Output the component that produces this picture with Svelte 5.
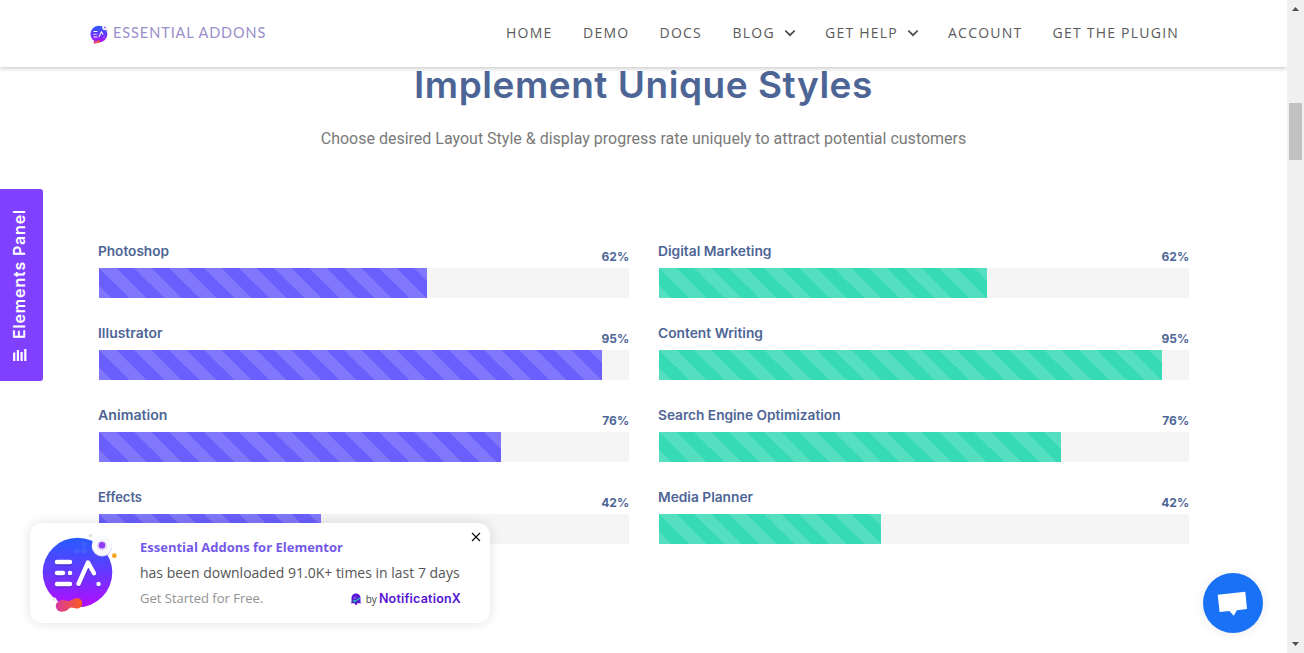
<script>
  const nav = [
    { label: 'HOME' }, { label: 'DEMO' }, { label: 'DOCS' },
    { label: 'BLOG', menu: true }, { label: 'GET HELP', menu: true },
    { label: 'ACCOUNT' }, { label: 'GET THE PLUGIN' }
  ];
  const groups = [
    { tone: 'violet', bars: [['Photoshop', 62, 71], ['Illustrator', 95, 64.5], ['Animation', 76, 69.5], ['Effects', 42, 44]] },
    { tone: 'mint', bars: [['Digital Marketing', 62, 113.5], ['Content Writing', 95, 105], ['Search Engine Optimization', 76, 182.5], ['Media Planner', 42, 95]] }
  ];
</script>

{#snippet logo(id)}
  <svg viewBox="0 0 78 80" class="mark" aria-hidden="true">
    <defs>
      <linearGradient id={id} x1="0" y1="0" x2="0" y2="1">
        <stop offset="0" stop-color="#265cff" />
        <stop offset=".5" stop-color="#6638ff" />
        <stop offset="1" stop-color="#b40cff" />
      </linearGradient>
      <linearGradient id="{id}-b" x1="0" y1="0" x2="1" y2="0">
        <stop offset="0" stop-color="#d63aa0" />
        <stop offset="1" stop-color="#fb5b1b" />
      </linearGradient>
    </defs>
    <circle cx="36.500" cy="40.500" r="34.800" fill="url(#{id})" />
    <g fill="#4260fb" stroke="#4260fb" stroke-width="1.500"><circle cx="36" cy="19" r="1.800" /><circle cx="43" cy="19" r="1.800" /><circle cx="43" cy="12" r="1.500" /><path d="M36 19h7v-7" fill="none" /></g>
    <circle cx="61" cy="14.300" r="10.300" fill="#d4d0ee" />
    <circle cx="61" cy="13.500" r="10" fill="#fafafe" />
    <circle cx="61" cy="13.500" r="5" fill="#e0d4fb" />
    <circle cx="61" cy="13.200" r="3.200" fill="#9239f6" />
    <circle cx="49.500" cy="3.500" r="1.700" fill="#ddd" />
    <circle cx="73.300" cy="23.700" r="2.400" fill="#f8a51b" />
    <path d="M16 31.600h13M16 42.600h6M29 42.600h.1M16 53.600h13M37.500 53.100 47 32.600 53 42.600M57.500 53.600h.1" fill="none" stroke="#3c1ba8" stroke-opacity=".45" stroke-width="4.200" stroke-linecap="round" stroke-linejoin="round" />
    <path d="M16 30h13M16 41h6M29 41h.1M16 52h13M37.500 51.800 47 30.500 53 41.300M57.500 52h.1" fill="none" stroke="#fff" stroke-width="4.400" stroke-linecap="round" stroke-linejoin="round" />
    <circle cx="13.500" cy="67.500" r="2" fill="#eee" />
    <path d="M19 68.500c4-2 6 1 9 .5s5-3 8-3a5 5 0 0 1 0 10.500c-4 0-5-2-8 0-1 1-3 3-6 3a5.600 5.600 0 0 1-3-11Z" fill="url(#{id}-b)" />
  </svg>
{/snippet}

<div class="window">
  <div class="page">
    <header>
      <div class="brand">
        {@render logo('brand')}
        <span>ESSENTIAL ADDONS</span>
      </div>
      <nav>
        {#each nav as item}
          <a href="#top">{item.label}{#if item.menu}<svg width="12" height="8" viewBox="0 0 12 8"><path d="m1.300 1.500 4.700 4.700 4.700-4.700" fill="none" stroke="#454545" stroke-width="1.700" /></svg>{/if}</a>
        {/each}
      </nav>
    </header>

    <main>
      <h1>Implement Unique Styles</h1>
      <p class="lead">Choose desired Layout Style &amp; display progress rate uniquely to attract potential customers</p>
      <div class="groups">
        {#each groups as group}
          <section class={group.tone}>
            {#each group.bars as [name, value, width]}
              <div class="skill">
                <div class="caption">
                  <svg class="name" width={width + 2} height="20"><text x="0" y="14" textLength={width} lengthAdjust="spacingAndGlyphs">{name}</text></svg>
                  <span class="value">{value}%</span>
                </div>
                <div class="track"><div class="fill" style="width: {value}%"></div></div>
              </div>
            {/each}
          </section>
        {/each}
      </div>
    </main>

    <aside class="panel">
      <svg width="14" height="13" viewBox="0 0 14 13"><path d="M1.200 3.500V12M4.900 1V12M8.600 3v9M12.300 0v12" stroke="#fff" stroke-width="2.200" /></svg>
      <span>Elements Panel</span>
    </aside>

    <div class="toast">
      <div class="toast-logo">{@render logo('toast')}</div>
      <div class="toast-body">
        <strong>Essential Addons for Elementor</strong>
        <span class="message">has been downloaded 91.0K+ times in last 7 days</span>
        <div class="foot">
          <span>Get Started for Free.</span>
          <span class="credit">
            <svg width="12" height="12" viewBox="0 0 12 12"><path d="M1.500 9.500V5a4.500 4.500 0 0 1 9 0v4.500l1.300.8H.2Z" fill="#5614d5" /><circle cx="6" cy="10.800" r="1.200" fill="#5614d5" /><circle cx="5" cy="4.800" r="1.500" fill="#7e55e8" /><path d="M3 7.500 5 8.500 10 5" fill="none" stroke="#22c7a5" stroke-width="1.400" /></svg>
            <span class="by">by</span><b>NotificationX</b>
          </span>
        </div>
      </div>
      <svg class="close" width="10" height="10" viewBox="0 0 10 10"><path d="m1 1 8 8M9 1 1 9" stroke="#111" stroke-width="1.200" /></svg>
    </div>

    <div class="chat">
      <svg width="60" height="60" viewBox="0 0 60 60"><path d="m14.700 21.700 27.600-3 1.700 17.300-10 1.200-3.300 5.600-4.300-4.900-9.800 1Z" fill="#fff" /></svg>
    </div>
  </div>

  <div class="scrollbar">
    <svg width="7" height="4" viewBox="0 0 7 4"><path d="M0 4h7L3.500 0Z" fill="#505050" /></svg>
    <div class="thumb"></div>
    <svg class="down" width="7" height="4" viewBox="0 0 7 4"><path d="M0 0h7L3.500 4Z" fill="#505050" /></svg>
  </div>
</div>

<style>
  :global(body) { overflow: hidden; background: #fff; }
  .window { display: flex; width: 1304px; height: 653px; overflow: hidden; }
  .page { position: relative; width: 1287px; height: 653px; overflow: hidden; }
  svg { display: block; }
  header {
    position: relative; z-index: 2; box-sizing: border-box; display: flex; align-items: center;
    height: 67px; padding: 0 0 1px 90px; background: #fff; box-shadow: 0 1px 5px rgba(0, 0, 0, .25);
  }
  .brand { display: flex; align-items: center; gap: 4px; width: 416px; }
  .brand .mark { width: 19px; height: 20px; margin-top: 2px; }
  .brand span { color: #9a8ecb; font: 400 14.500px/20px Lato, sans-serif; letter-spacing: .920px; }
  nav { display: grid; grid-template-columns: 77px 76.500px 73px 92.500px 123px 104.500px 130px; }
  nav a {
    display: flex; align-items: center; gap: 9px; color: #5a5a5a; text-decoration: none;
    white-space: nowrap; font: 400 14px/20px "Open Sans", sans-serif; letter-spacing: 1.230px;
  }
  main { display: flex; flex-direction: column; align-items: center; }
  h1 { margin: -5px 0 0; color: #4d6595; font: 600 37px/46px Inter, sans-serif; letter-spacing: .530px; }
  .lead { margin: 19px 0 0; color: #7a7a7a; font: 400 16px/24px Roboto, sans-serif; }
  .groups { display: grid; grid-template-columns: 530px 530px; gap: 30px; margin: 91px 0 0; }
  .skill { height: 82px; }
  .caption { display: flex; justify-content: space-between; height: 26px; }
  .name { margin-left: -.5px; }
  .name text { fill: #4d6595; font: 600 13px Inter, sans-serif; }
  .value { margin: 5px -.6px 0 0; color: #4d6595; font: 700 12px/20px Inter, sans-serif; }
  .track { height: 30px; background: #f5f5f5; }
  .fill {
    height: 30px; background-color: #6a5ffc; background-size: 35px 35px;
    background-image: linear-gradient(45deg, rgba(255, 255, 255, .15) 25%, transparent 25%, transparent 50%, rgba(255, 255, 255, .15) 50%, rgba(255, 255, 255, .15) 75%, transparent 75%);
  }
  .mint .fill { background-color: #36dab5; }
  .panel {
    position: absolute; left: 0; top: 189px; z-index: 3; box-sizing: border-box; width: 43px; height: 192px;
    display: flex; flex-direction: column-reverse; align-items: center; justify-content: flex-start; gap: 10px;
    padding: 0 4px 19px 0; background: #8040ff; border-radius: 0 3px 3px 0;
  }
  .panel span {
    writing-mode: vertical-rl; transform: rotate(180deg); margin-right: 1px; color: #fff;
    font: 600 16px/20px Inter, sans-serif; letter-spacing: .850px; white-space: nowrap;
  }
  .toast {
    position: absolute; left: 30px; top: 523px; z-index: 3; display: flex; width: 460px; height: 100px;
    background: #fff; border-radius: 12px; box-shadow: 0 0 12px rgba(0, 0, 0, .12);
  }
  .toast-logo { width: 110px; padding: 9px 0 0 11px; box-sizing: border-box; }
  .toast-logo .mark { width: 78px; height: 80px; }
  .toast-body { display: flex; flex-direction: column; width: 321px; padding-top: 14px; font-family: "Open Sans", sans-serif; white-space: nowrap; }
  .toast-body strong { color: #7459e8; font-size: 13px; line-height: 20px; }
  .message { margin-top: 6px; color: #555; font-size: 14px; line-height: 20px; }
  .foot { display: flex; justify-content: space-between; margin-top: 5px; color: #929292; font-size: 13px; line-height: 20px; }
  .credit { display: flex; align-items: center; padding-top: 1px; }
  .credit b { color: #5614d5; font: 600 12.500px/20px Inter, sans-serif; letter-spacing: .200px; }
  .by { margin: 0 2px 0 4px; color: #444; font-size: 10px; }
  .close { position: absolute; right: 9px; top: 9px; }
  .chat { position: absolute; left: 1203px; top: 573px; width: 60px; height: 60px; border-radius: 50%; background: #1972f5; box-shadow: 0 1px 12px rgba(0, 0, 0, .08); }
  .scrollbar {
    box-sizing: border-box; display: flex; flex-direction: column; align-items: center;
    width: 17px; height: 653px; padding: 7px 0 7px; background: #f0f0f0;
  }
  .thumb { width: 13px; height: 57px; margin-top: 92px; background: #c1c1c1; }
  .down { margin-top: auto; }
</style>
